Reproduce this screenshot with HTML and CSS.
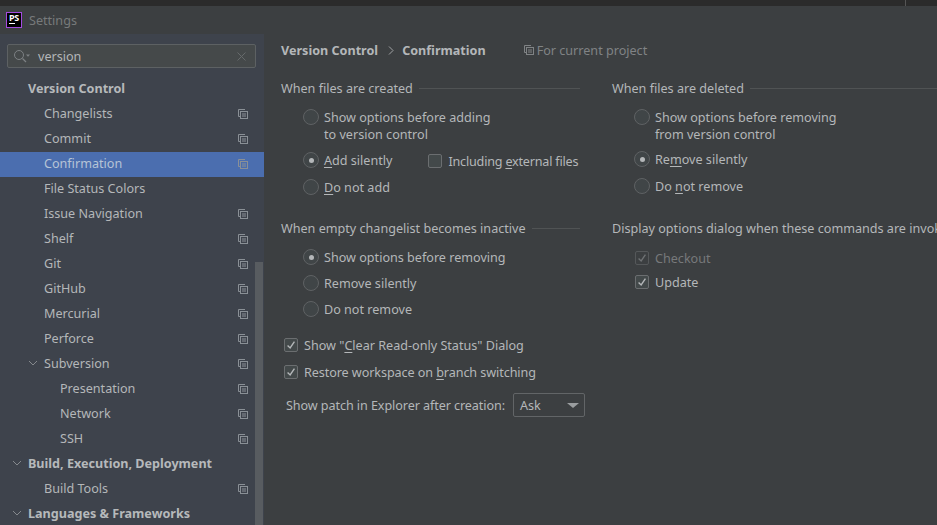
FILE: index.html
```html
<!DOCTYPE html>
<html lang="en">
<head>
    <meta charset="UTF-8">
    <title>Settings</title>
    <link rel="stylesheet" href="styles.css">
</head>
<body>
    <svg class="defs" width="0" height="0">
        <symbol id="copy" viewBox="0 0 10 10">
            <path d="M7 .5H.5V7.5H2" fill="none" stroke="currentColor"/>
            <rect x="2.5" y="2.5" width="7" height="7" fill="none" stroke="currentColor"/>
            <path d="M4 5h4M4 7h4" fill="none" stroke="currentColor"/>
        </symbol>
        <symbol id="tick" viewBox="0 0 14 14">
            <path d="M3 7.5l3 3 5-7.5" fill="none" stroke="currentColor" stroke-width="1.6"/>
        </symbol>
        <symbol id="chevron" viewBox="0 0 10 10">
            <path d="M1 3l4 4 4-4" fill="none" stroke="currentColor"/>
        </symbol>
    </svg>

    <div class="topstrip"><span class="tick-mark"></span></div>

    <div class="titlebar">
        <div class="ps-logo"><span class="ps-text">PS</span><span class="ps-line"></span></div>
        <span class="title">Settings</span>
    </div>

    <div class="main">
        <aside class="sidebar">
            <div class="search">
                <svg class="search-icon" width="18" height="14" viewBox="0 0 18 14">
                    <circle cx="6" cy="6" r="4.5" fill="none" stroke="#7d8184"/>
                    <path d="M9.5 9.5l3.5 3.5" stroke="#7d8184" stroke-width="1.2"/>
                    <path d="M13 5.5h4l-2 2.2z" fill="#7d8184"/>
                </svg>
                <span class="search-text">version</span>
                <svg class="search-clear" width="9" height="9" viewBox="0 0 9 9">
                    <path d="M.5.5l8 8M8.5.5l-8 8" stroke="#666a6b"/>
                </svg>
            </div>
            <ul class="tree">
                <li class="row bold lvl0">Version Control</li>
                <li class="row lvl1">Changelists<svg class="copy"><use href="#copy"/></svg></li>
                <li class="row lvl1">Commit<svg class="copy"><use href="#copy"/></svg></li>
                <li class="row lvl1 selected">Confirmation<svg class="copy"><use href="#copy"/></svg></li>
                <li class="row lvl1">File Status Colors</li>
                <li class="row lvl1">Issue Navigation<svg class="copy"><use href="#copy"/></svg></li>
                <li class="row lvl1">Shelf<svg class="copy"><use href="#copy"/></svg></li>
                <li class="row lvl1">Git<svg class="copy"><use href="#copy"/></svg></li>
                <li class="row lvl1">GitHub<svg class="copy"><use href="#copy"/></svg></li>
                <li class="row lvl1">Mercurial<svg class="copy"><use href="#copy"/></svg></li>
                <li class="row lvl1">Perforce<svg class="copy"><use href="#copy"/></svg></li>
                <li class="row lvl1"><svg class="chev"><use href="#chevron"/></svg>Subversion<svg class="copy"><use href="#copy"/></svg></li>
                <li class="row lvl2">Presentation<svg class="copy"><use href="#copy"/></svg></li>
                <li class="row lvl2">Network<svg class="copy"><use href="#copy"/></svg></li>
                <li class="row lvl2">SSH<svg class="copy"><use href="#copy"/></svg></li>
                <li class="row bold lvl0"><svg class="chev"><use href="#chevron"/></svg>Build, Execution, Deployment</li>
                <li class="row lvl1">Build Tools<svg class="copy"><use href="#copy"/></svg></li>
                <li class="row bold lvl0"><svg class="chev"><use href="#chevron"/></svg>Languages &amp; Frameworks</li>
            </ul>
            <div class="scrollbar"></div>
        </aside>

        <section class="content">
            <div class="crumbs">
                <b>Version Control</b>
                <svg class="crumb-sep" width="6" height="9" viewBox="0 0 6 9"><path d="M1 .5l4 4-4 4" fill="none" stroke="#a0a3a5"/></svg>
                <b>Confirmation</b>
                <span class="project"><svg class="copy-small"><use href="#copy"/></svg>For current project</span>
            </div>

            <div class="columns">
                <div class="col-left">
                    <div class="group-title"><span>When files are created</span><i></i></div>
                    <div class="opt two-line opt-first"><span class="radio"></span><span class="two-line-text">Show options before adding<br>to version control</span></div>
                    <div class="opt opt-add">
                        <span class="radio on"></span><span><u>A</u>dd silently</span>
                        <span class="check inline-check"></span><span class="inline-label">Including <u>e</u>xternal files</span>
                    </div>
                    <div class="opt opt-tight"><span class="radio"></span><span><u>D</u>o not add</span></div>

                    <div class="group-title title-second"><span>When empty changelist becomes inactive</span><i></i></div>
                    <div class="opt opt26 opt-inactive"><span class="radio on"></span><span>Show options before removing</span></div>
                    <div class="opt opt26"><span class="radio"></span><span>Remove silently</span></div>
                    <div class="opt opt26"><span class="radio"></span><span>Do not remove</span></div>

                    <div class="opt-check check-first"><span class="check"><svg class="tick"><use href="#tick"/></svg></span><span>Show "<u>C</u>lear Read-only Status" Dialog</span></div>
                    <div class="opt-check"><span class="check"><svg class="tick"><use href="#tick"/></svg></span><span class="tight-text">Restore workspace on <u>b</u>ranch switching</span></div>
                    <div class="patch">
                        <span class="tight-text">Show patch in Explorer after creation:</span>
                        <div class="combo"><span>Ask</span><span class="combo-arrow"></span></div>
                    </div>
                </div>

                <div class="col-right">
                    <div class="group-title"><span>When files are deleted</span><i></i></div>
                    <div class="opt two-line opt-first"><span class="radio"></span><span class="two-line-text">Show options before removing<br>from version control</span></div>
                    <div class="opt opt-remove"><span class="radio on"></span><span>Re<u>m</u>ove silently</span></div>
                    <div class="opt opt-tight"><span class="radio"></span><span>Do <u>n</u>ot remove</span></div>

                    <div class="group-title title-second nowrap"><span>Display options dialog when these commands are invoked:</span></div>
                    <div class="opt-check check-right disabled"><span class="check"><svg class="tick"><use href="#tick"/></svg></span><span>Checkout</span></div>
                    <div class="opt-check check-right update"><span class="check"><svg class="tick"><use href="#tick"/></svg></span><span>Update</span></div>
                </div>
            </div>
        </section>
    </div>
</body>
</html>
```
FILE: styles.css
```css
* { box-sizing: border-box; }
html, body { height: 100%; }
body { margin: 0; overflow: hidden; background: #3c3f41; color: #b4b7b9; font-family: "Noto Sans", "Open Sans", sans-serif; font-size: 12.6px; }
ul { list-style: none; margin: 0; padding: 0; }
u { text-underline-offset: 2px; }
.defs { position: absolute; }

.topstrip { height: 6px; background: #2b2b2b; display: flex; justify-content: flex-end; padding-right: 31px; }
.tick-mark { width: 1px; background: #555; }

.titlebar { height: 28px; display: flex; align-items: center; padding-left: 6px; background: #3c3f41; }
.ps-logo { width: 16px; height: 16px; background: #000; border: 1px solid #a44be0; color: #fff; font-weight: 700; font-size: 9px; line-height: 9px; padding-left: 2px; }
.ps-text { display: block; letter-spacing: -.3px; }
.ps-line { display: block; width: 6px; height: 1px; background: #fff; margin-top: 1px; }
.title { margin-left: 7px; color: #777a7b; }

.main { display: flex; height: 491px; }
.sidebar { width: 264px; flex: none; background: #3e434c; padding-top: 10px; position: relative; overflow: hidden; }
.search { margin-left: 7px; width: 249px; height: 24px; border: 1px solid #5d6163; border-radius: 2px; background: #45494a; display: flex; align-items: center; padding: 0 9px 0 5px; }
.search-icon { flex: none; }
.search-text { margin-left: 7px; flex: 1; color: #b4b7b9; }
.tree { margin-top: 9px; }
.row { height: 25px; padding-bottom: 3px; display: flex; align-items: center; position: relative; white-space: nowrap; }
.lvl0 { padding-left: 28px; }
.lvl1 { padding-left: 44px; }
.lvl2 { padding-left: 60px; }
.bold { font-weight: 700; color: #b6b9bb; }
.selected { background: #4b6eaf; color: #b6c4d6; z-index: 1; }
.copy { position: absolute; left: 238px; top: 7px; width: 10px; height: 10px; color: #8a9096; }
.chev { width: 10px; height: 10px; margin-left: -16px; margin-right: 6px; color: #85898d; }
.scrollbar { position: absolute; left: 255px; top: 228px; width: 8px; bottom: 0; background: #585c60; }

.content { flex: 1; min-width: 0; padding-left: 17px; overflow: hidden; }
.crumbs { height: 20px; margin-top: 6px; display: flex; align-items: center; white-space: nowrap; color: #b4b7b9; }
.crumb-sep { margin: 0 8px 0 10px; }
.project { margin-left: 38px; color: #808385; display: flex; align-items: center; }
.copy-small { width: 10px; height: 10px; margin-right: 3px; color: #808385; }

.columns { display: flex; margin-top: 17px; gap: 32px; }
.col-left { width: 299px; flex: none; }
.col-right { width: 400px; flex: none; }
.group-title { height: 22px; display: flex; align-items: center; gap: 6px; white-space: nowrap; }
.group-title i { flex: 1; height: 1px; background: #505354; }
.title-second { margin-top: 18px; }
.col-right .title-second { margin-top: 19px; }

.opt { display: flex; align-items: center; padding-left: 22px; white-space: nowrap; height: 24px; }
.two-line { align-items: flex-start; height: 34px; line-height: 17px; }
.two-line-text { margin-top: 1px; }
.tight-text { letter-spacing: -.08px; }
.opt-first { margin-top: 9px; }
.opt-add { margin-top: 6px; }
.opt-remove { margin-top: 5px; }
.opt-tight { margin-top: 3px; }
.opt26 { height: 26px; }
.opt-inactive { margin-top: 5px; }

.radio { width: 16px; height: 16px; border: 1px solid #5f6264; border-radius: 50%; background: #404547; margin-right: 5px; flex: none; position: relative; }
.two-line .radio { margin-top: 1px; }
.radio.on::after { content: ""; position: absolute; left: 4.5px; top: 4.5px; width: 5px; height: 5px; border-radius: 50%; background: #b4b7b9; }

.check { width: 14px; height: 14px; border: 1px solid #6b6e70; border-radius: 2px; background: #43494a; flex: none; margin-right: 6px; display: flex; }
.tick { width: 12px; height: 12px; color: #b4b7b9; }
.inline-check { margin: 2px 6px 0 36px; }
.inline-label { padding-top: 2px; letter-spacing: -.2px; }

.opt-check { display: flex; align-items: center; height: 26px; padding-left: 3px; white-space: nowrap; }
.check-first { margin-top: 10px; }
.check-first + .opt-check { margin-top: 1px; }
.check-right { height: 24px; padding-left: 23px; }
.disabled { margin-top: 7px; color: #77797b; }
.disabled .check { border-color: #55585a; background: none; }
.disabled .tick { color: #6e7173; }

.patch { display: flex; align-items: center; height: 24px; margin-top: 8px; padding-left: 5px; white-space: nowrap; }
.combo { margin-left: 8px; width: 72px; flex: none; height: 24px; border: 1px solid #626567; border-radius: 2px; display: flex; align-items: center; justify-content: space-between; padding: 1px 5px 0 6px; background: #3c3f41; }
.combo-arrow { width: 0; height: 0; border-left: 6px solid transparent; border-right: 6px solid transparent; border-top: 5px solid #9a9d9f; }
```
